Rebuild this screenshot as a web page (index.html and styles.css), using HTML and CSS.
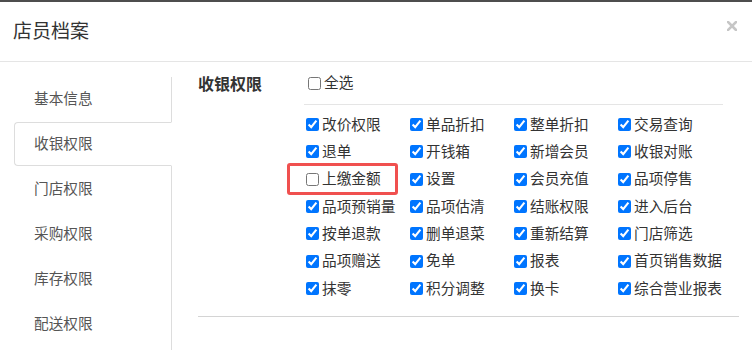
FILE: index.html
```html
<!DOCTYPE html>
<html lang="zh-CN">
<head>
<meta charset="utf-8">
<title>店员档案</title>
<link rel="stylesheet" href="styles.css">
</head>
<body>
<div class="backdrop-strip"></div>
<div class="modal">
  <div class="modal-header">
    <h4 class="modal-title">店员档案</h4>
    <button class="close" type="button" aria-label="关闭">
      <svg width="10" height="10" viewBox="0 0 10 10"><path d="M1 1L9 9M9 1L1 9" stroke="#c6c6c6" stroke-width="2.6" stroke-linecap="square"/></svg>
    </button>
  </div>
  <div class="modal-body">
    <ul class="nav">
      <li class="tab">基本信息</li>
      <li class="tab active">收银权限</li>
      <li class="tab">门店权限</li>
      <li class="tab">采购权限</li>
      <li class="tab">库存权限</li>
      <li class="tab">配送权限</li>
    </ul>
    <div class="panel">
      <div class="section">
        <div class="section-title">收银权限</div>
        <div class="section-main">
          <label class="check check-all"><input type="checkbox">全选</label>
          <div class="divider"></div>
          <div class="grid">
            <label class="check"><input type="checkbox" checked>改价权限</label>
            <label class="check"><input type="checkbox" checked>单品折扣</label>
            <label class="check"><input type="checkbox" checked>整单折扣</label>
            <label class="check"><input type="checkbox" checked>交易查询</label>
            <label class="check"><input type="checkbox" checked>退单</label>
            <label class="check"><input type="checkbox" checked>开钱箱</label>
            <label class="check"><input type="checkbox" checked>新增会员</label>
            <label class="check"><input type="checkbox" checked>收银对账</label>
            <label class="check highlighted"><input type="checkbox">上缴金额<span class="mark"></span></label>
            <label class="check"><input type="checkbox" checked>设置</label>
            <label class="check"><input type="checkbox" checked>会员充值</label>
            <label class="check"><input type="checkbox" checked>品项停售</label>
            <label class="check"><input type="checkbox" checked>品项预销量</label>
            <label class="check"><input type="checkbox" checked>品项估清</label>
            <label class="check"><input type="checkbox" checked>结账权限</label>
            <label class="check"><input type="checkbox" checked>进入后台</label>
            <label class="check"><input type="checkbox" checked>按单退款</label>
            <label class="check"><input type="checkbox" checked>删单退菜</label>
            <label class="check"><input type="checkbox" checked>重新结算</label>
            <label class="check"><input type="checkbox" checked>门店筛选</label>
            <label class="check"><input type="checkbox" checked>品项赠送</label>
            <label class="check"><input type="checkbox" checked>免单</label>
            <label class="check"><input type="checkbox" checked>报表</label>
            <label class="check"><input type="checkbox" checked>首页销售数据</label>
            <label class="check"><input type="checkbox" checked>抹零</label>
            <label class="check"><input type="checkbox" checked>积分调整</label>
            <label class="check"><input type="checkbox" checked>换卡</label>
            <label class="check"><input type="checkbox" checked>综合营业报表</label>
          </div>
        </div>
      </div>
      <div class="bottom-rule"></div>
    </div>
  </div>
</div>
</body>
</html>
```

FILE: styles.css
```css
* { box-sizing: border-box; }
html, body {
  margin: 0;
  padding: 0;
  background: #fff;
  overflow: hidden;
}
body {
  width: 752px;
  height: 350px;
  font-family: "Noto Sans CJK SC", "Noto Sans", sans-serif;
  color: #333;
}
.backdrop-strip {
  height: 2px;
  background: #4e4e4e;
}
.modal {
  background: #fff;
}
.modal-header {
  height: 60px;
  border-bottom: 1px solid #e5e5e5;
  display: flex;
  justify-content: space-between;
  align-items: center;
  padding: 0 15px 0 13px;
}
.modal-title {
  margin: 0;
  padding-bottom: 3px;
  font-size: 19px;
  font-weight: normal;
  line-height: 26px;
  color: #333;
}
.close {
  align-self: flex-start;
  margin-top: 19px;
  padding: 0;
  border: 0;
  background: none;
  width: 10px;
  height: 10px;
  display: block;
}
.close svg { display: block; }
.modal-body {
  display: flex;
  padding-top: 10px;
  height: 288px;
}
.nav {
  list-style: none;
  margin: 5px 0 0 14px;
  padding: 0;
  width: 158px;
  border-right: 1px solid #ddd;
  display: flex;
  flex-direction: column;
  gap: 1px;
}
.tab {
  height: 44px;
  display: flex;
  align-items: center;
  padding: 0 0 4px 19px;
  margin-right: -1px;
  border: 1px solid transparent;
  border-radius: 4px 0 0 4px;
  font-size: 14.67px;
  color: #555;
}
.tab.active {
  border-color: #ddd;
  border-right-color: #fff;
  background: #fff;
}
.panel {
  margin-left: 26px;
  width: 541px;
}
.section {
  display: flex;
}
.section-title {
  width: 104px;
  font-size: 16px;
  font-weight: bold;
  line-height: 22px;
  color: #333;
}
.section-main {
  width: 421px;
}
.check {
  display: flex;
  align-items: center;
  font-size: 14.67px;
  color: #333;
  white-space: nowrap;
  position: relative;
  padding-bottom: 3px;
}
.check input {
  width: 13px;
  height: 13px;
  margin: 3px 3px 0 4px;
  flex: none;
}
.check-all {
  height: 22px;
}
.check-all input {
  margin-left: 6px;
}
.divider {
  height: 1px;
  background: #e5e5e5;
  margin: 10px 0 0 2px;
}
.grid {
  display: grid;
  grid-template-columns: repeat(4, 104px);
  grid-auto-rows: 27.33px;
  margin-top: 6px;
}
.mark {
  position: absolute;
  left: -15px;
  top: -3px;
  width: 111px;
  height: 32px;
  border: 3px solid #f0504f;
  border-radius: 3px;
  pointer-events: none;
}
.bottom-rule {
  height: 1px;
  background: #d4d4d4;
  margin-top: 14px;
}
```
